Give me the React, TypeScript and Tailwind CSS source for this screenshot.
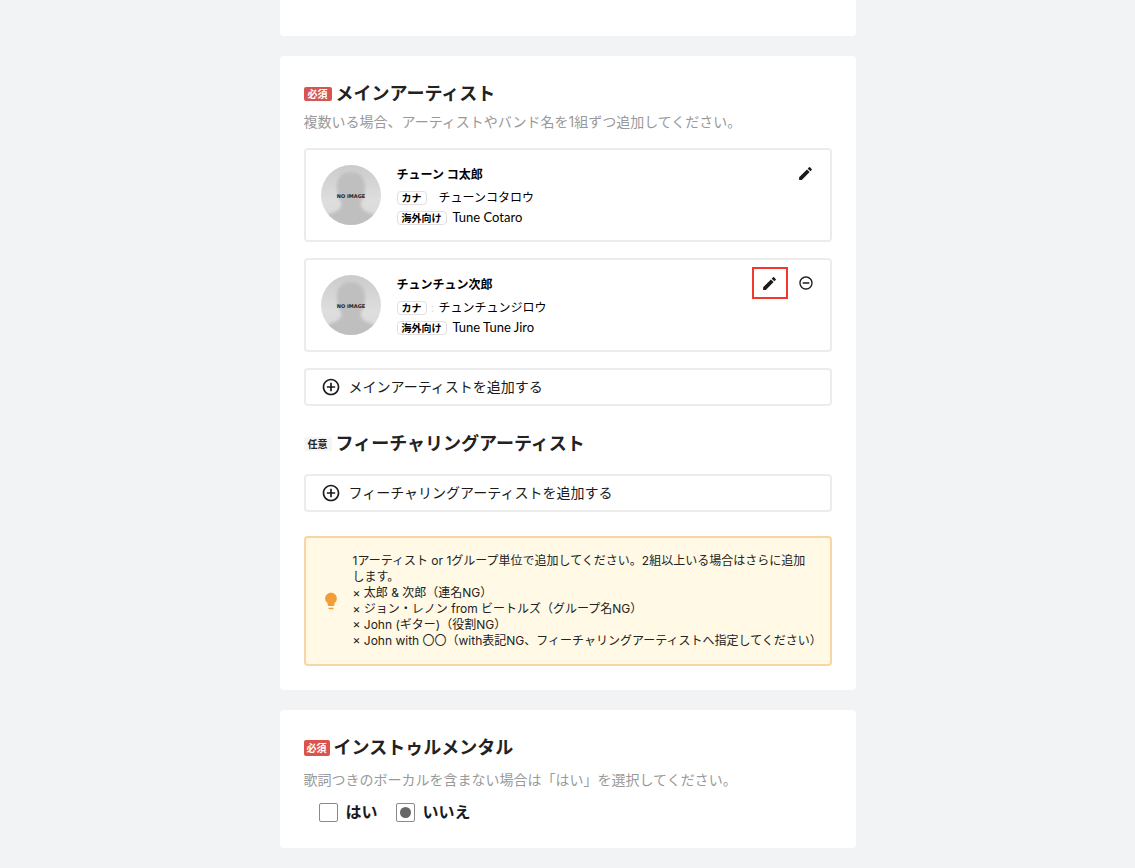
import { useState } from 'react';
import type { ReactNode } from 'react';
import { MdAddCircleOutline, MdEdit, MdLightbulb, MdRemoveCircleOutline } from 'react-icons/md';

interface Artist {
  name: string;
  kana: string;
  overseas: string;
  separator?: string;
  removable?: boolean;
}

const artists: Artist[] = [
  { name: 'チューン コ太郎', kana: 'チューンコタロウ', overseas: 'Tune Cotaro' },
  {
    name: 'チュンチュン次郎',
    kana: 'チュンチュンジロウ',
    overseas: 'Tune Tune Jiro',
    separator: ':',
    removable: true,
  },
];

const notes = [
  '1アーティスト or 1グループ単位で追加してください。2組以上いる場合はさらに追加\nします。',
  '× 太郎 & 次郎（連名NG）',
  '× ジョン・レノン from ビートルズ（グループ名NG）',
  '× John (ギター)（役割NG）',
  '× John with 〇〇（with表記NG、フィーチャリングアーティストへ指定してください）',
];

function RequiredBadge({ compact = false }: { compact?: boolean }) {
  return (
    <span
      className={
        compact
          ? 'rounded-xs bg-[#dc524c] px-[3px] text-[10px] leading-4 font-bold text-white'
          : 'rounded-xs bg-[#d65552] px-1 text-[10px] leading-[14px] font-bold text-white'
      }
    >
      必須
    </span>
  );
}

function OptionalBadge() {
  return (
    <span className="rounded-xs bg-[#f5f5f5] px-1 text-[10px] leading-[14px] font-bold text-[#222]">任意</span>
  );
}

function Heading({ badge, children }: { badge: ReactNode; children: ReactNode }) {
  return (
    <div className="flex items-center gap-1">
      {badge}
      <h2 className="text-lg leading-7 font-bold text-[#222]">{children}</h2>
    </div>
  );
}

function Avatar() {
  return (
    <svg viewBox="0 0 60 60" className="size-15 shrink-0" role="img" aria-label="NO IMAGE">
      <defs>
        <clipPath id="avatar-clip">
          <circle cx="30" cy="30" r="30" />
        </clipPath>
        <filter id="avatar-soft" x="-20%" y="-20%" width="140%" height="140%">
          <feGaussianBlur stdDeviation="1.6" />
        </filter>
        <linearGradient id="avatar-bg" x1="0" y1="0" x2="0" y2="1">
          <stop offset="0" stopColor="#cbcbcb" />
          <stop offset="0.6" stopColor="#dedede" />
          <stop offset="1" stopColor="#d8d8d8" />
        </linearGradient>
      </defs>
      <g clipPath="url(#avatar-clip)">
        <rect width="60" height="60" fill="url(#avatar-bg)" />
        <path
          d="M30 7c-9 0-14 6-14 14 0 7 1 12 4 16 1 5-1 8-6 10C8 49 3 51 0 55v12h60V55c-3-4-8-6-14-8-5-2-7-5-6-10 3-4 4-9 4-16 0-8-5-14-14-14z"
          fill="#bfbfbf"
          filter="url(#avatar-soft)"
        />
      </g>
      <text
        x="30"
        y="33"
        textAnchor="middle"
        fontSize="5"
        fontWeight="700"
        fill="#222"
        className="font-['DejaVu_Sans',sans-serif]"
      >
        NO IMAGE
      </text>
    </svg>
  );
}

function Tag({ children }: { children: ReactNode }) {
  return (
    <span className="rounded-sm border border-[#e0e0e0] px-1 text-[10px] leading-3 font-bold text-black">
      {children}
    </span>
  );
}

function ArtistCard({ artist }: { artist: Artist }) {
  return (
    <li className="flex items-start gap-4 rounded-sm border-2 border-[#ececec] p-[15px]">
      <Avatar />
      <div className="min-w-0 flex-1 text-black">
        <p className="text-xs leading-5 font-bold">{artist.name}</p>
        <p className="mt-[3px] flex h-5 items-center text-xs">
          <Tag>カナ</Tag>
          <span className="w-3 text-center text-[#ddd]">{artist.separator}</span>
          {artist.kana}
        </p>
        <p className="-mb-2 flex h-5 items-center gap-1.5 text-[13px]">
          <Tag>海外向け</Tag>
          <span className="font-[Lato,sans-serif]">{artist.overseas}</span>
        </p>
      </div>
      <div className="-mt-2 -mr-[9px] flex text-[#1a1a1a]">
        <button
          type="button"
          aria-label="編集"
          className={
            artist.removable
              ? 'flex h-8 w-9 items-center justify-center border-2 border-[#f03a2e]'
              : 'flex h-8 w-9 items-center justify-center'
          }
        >
          <MdEdit size={17} />
        </button>
        {artist.removable && (
          <button type="button" aria-label="削除" className="flex h-8 w-9 items-center justify-center">
            <MdRemoveCircleOutline size={16} />
          </button>
        )}
      </div>
    </li>
  );
}

function AddButton({ children }: { children: ReactNode }) {
  return (
    <button
      type="button"
      className="flex w-full items-center gap-2 rounded-sm border-2 border-[#ececec] px-[15px] py-[7px] text-sm text-[#1a1a1a]"
    >
      <MdAddCircleOutline size={20} />
      {children}
    </button>
  );
}

function Choice({ label, checked, onChange }: { label: string; checked: boolean; onChange: () => void }) {
  return (
    <label className="flex items-center gap-2 text-base leading-6 font-bold text-[#1a1a1a]">
      <input
        type="radio"
        name="instrumental"
        checked={checked}
        onChange={onChange}
        className="flex size-[19px] appearance-none items-center justify-center rounded-xs border border-[#8a8a8a] bg-white checked:before:size-[11px] checked:before:rounded-full checked:before:bg-[#666] checked:before:content-['']"
      />
      {label}
    </label>
  );
}

export default function App() {
  const [instrumental, setInstrumental] = useState(false);

  return (
    <main className="min-h-screen bg-[#f1f3f5] pb-5 font-[Inter,'Noto_Sans_CJK_JP',sans-serif]">
      <div className="mx-auto flex max-w-xl flex-col gap-5">
        <section className="h-9 rounded-b-sm bg-white" />

        <section className="rounded-sm bg-white p-6">
          <Heading badge={<RequiredBadge />}>メインアーティスト</Heading>
          <p className="text-sm leading-7 text-[#999]">
            複数いる場合、アーティストやバンド名を1組ずつ追加してください。
          </p>
          <ul className="mt-3 flex flex-col gap-4">
            {artists.map((artist) => (
              <ArtistCard key={artist.name} artist={artist} />
            ))}
          </ul>
          <div className="mt-4">
            <AddButton>メインアーティストを追加する</AddButton>
          </div>

          <div className="mt-6 mb-4">
            <Heading badge={<OptionalBadge />}>フィーチャリングアーティスト</Heading>
          </div>
          <AddButton>フィーチャリングアーティストを追加する</AddButton>

          <div className="mt-6 flex items-center gap-3 rounded-sm border-2 border-[#f9d5a3] bg-[#fff9e5] py-[15px] pr-1 pl-[15px] text-xs leading-4 text-[#222]">
            <MdLightbulb size={20} className="shrink-0 text-[#f29d38]" />
            <div className="whitespace-pre-line">
              {notes.map((note) => (
                <p key={note}>{note}</p>
              ))}
            </div>
          </div>
        </section>

        <section className="rounded-sm bg-white p-6">
          <Heading badge={<RequiredBadge compact />}>インストゥルメンタル</Heading>
          <p className="mt-1 text-sm leading-7 text-[#999]">
            歌詞つきのボーカルを含まない場合は「はい」を選択してください。
          </p>
          <div className="mt-1.5 ml-[15px] flex gap-[18px]">
            <Choice label="はい" checked={instrumental} onChange={() => setInstrumental(true)} />
            <Choice label="いいえ" checked={!instrumental} onChange={() => setInstrumental(false)} />
          </div>
        </section>
      </div>
    </main>
  );
}
